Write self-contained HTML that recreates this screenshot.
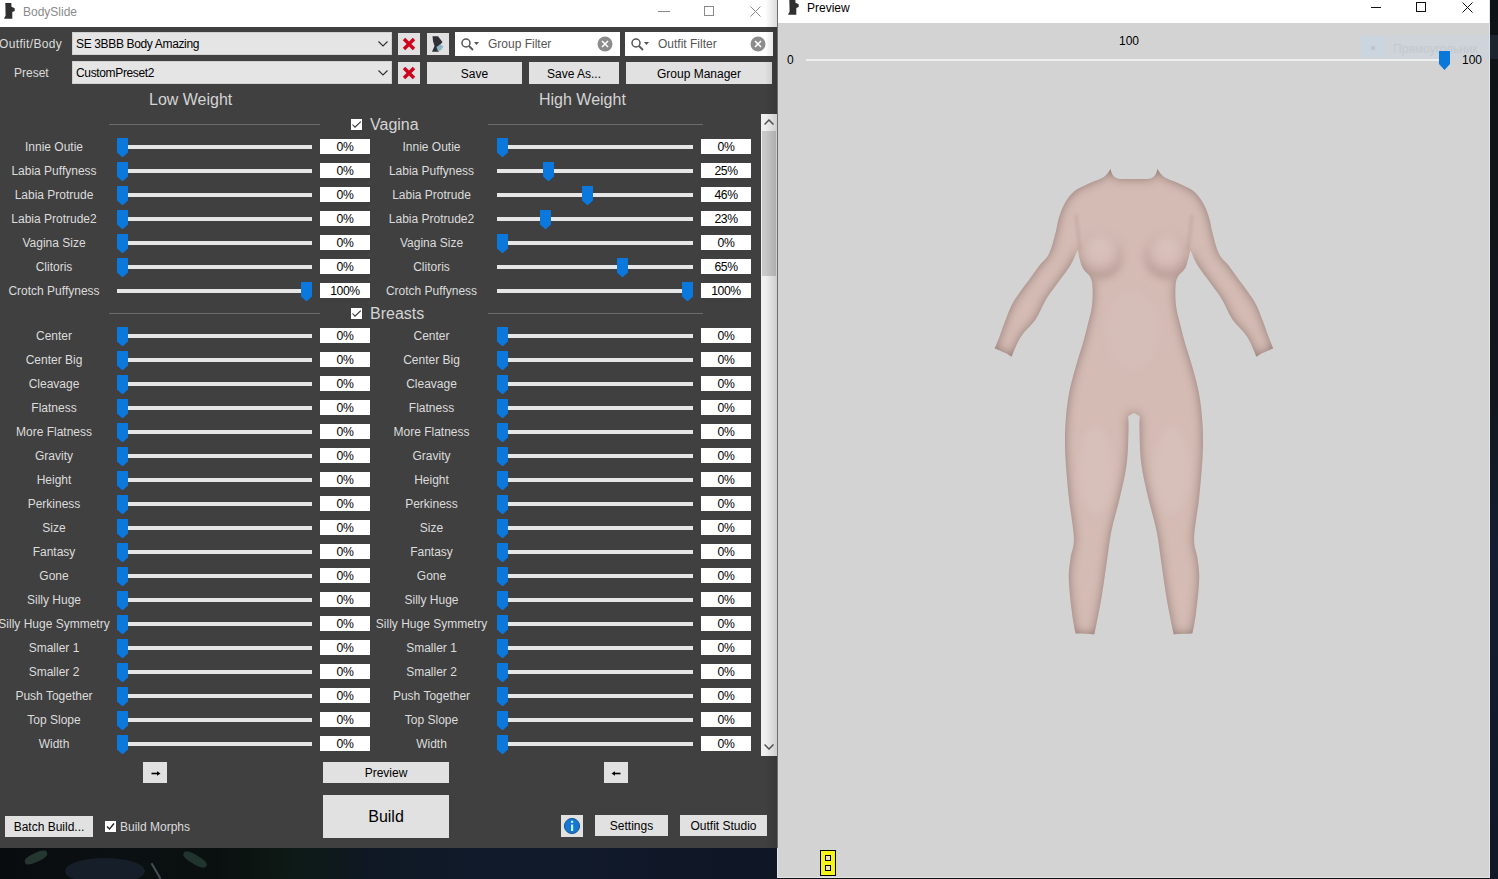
<!DOCTYPE html><html><head><meta charset="utf-8"><style>
*{box-sizing:border-box;margin:0;padding:0}
html,body{width:1498px;height:879px;overflow:hidden;background:#0b1016;font-family:"Liberation Sans",sans-serif;font-size:12px;position:relative}
.abs{position:absolute}
.t{position:absolute;white-space:nowrap;line-height:1}
.lbl{position:absolute;white-space:nowrap;color:#dcdcdc;font-size:12px;line-height:14px;text-align:center}
.trk{position:absolute;height:4px;background:#e6e6e6}
.thm{position:absolute;width:11px;height:20px}
.box{position:absolute;width:50px;height:15px;background:#fff;color:#000;font-size:12.2px;line-height:17px;text-align:center;letter-spacing:-0.4px}
.btn{position:absolute;background:#e1e1e1;color:#000;font-size:12px;text-align:center}
.sep{position:absolute;height:1px;background:#6b6b6b}
.hd{position:absolute;color:#d4d4d4;font-size:16px;line-height:18px;white-space:nowrap}
.cb{position:absolute;width:12px;height:12px;background:#fff}

</style></head><body>
<div class="abs" style="left:0;top:848px;width:777px;height:31px;background:linear-gradient(90deg,#090c0e 0%,#0b1012 15%,#0a100f 28%,#0e1a16 38%,#0f1824 48%,#111a2b 65%,#0f1726 100%)"></div>
<div class="abs" style="left:65px;top:858px;width:80px;height:26px;border-radius:50%;background:#17212c;opacity:.9"></div>
<div class="abs" style="left:24px;top:853px;width:24px;height:9px;border-radius:40%;background:#3a5a4a;opacity:.55;transform:rotate(-25deg)"></div>
<div class="abs" style="left:182px;top:855px;width:26px;height:9px;border-radius:40%;background:#38584a;opacity:.5;transform:rotate(30deg)"></div>
<div class="abs" style="left:155px;top:862px;width:2px;height:18px;background:#6a7a84;opacity:.6;transform:rotate(-30deg)"></div>
<div class="abs" style="left:1490px;top:0;width:8px;height:879px;background:linear-gradient(180deg,#0d1216 0%,#11171c 45%,#141e30 62%,#101826 100%)"></div>
<div class="abs" style="left:0;top:0;width:777px;height:27px;background:#fff"></div>
<div class="abs" style="left:0;top:27px;width:777px;height:821px;background:#404040"></div>
<svg class="abs" style="left:0;top:0" width="20" height="22" viewBox="0 0 20 22"><path d="M5.3 3 H11.3 L11.5 6.8 L14.7 8.2 V10.9 L12.3 12 V18.8 H4 L5.6 15.5 Z" fill="#303030"/></svg>
<div class="t" style="left:23px;top:5px;color:#8a8a8a;font-size:12px;line-height:14px">BodySlide</div>
<div class="abs" style="left:658px;top:11px;width:12px;height:1px;background:#8a8a8a"></div>
<div class="abs" style="left:704px;top:6px;width:10px;height:10px;border:1px solid #8a8a8a"></div>
<svg class="abs" style="left:750px;top:6px" width="11" height="11"><path d="M0.5 0.5 L10.5 10.5 M10.5 0.5 L0.5 10.5" stroke="#8a8a8a" stroke-width="1"/></svg>
<div class="t" style="left:-1px;top:37px;color:#dcdcdc;line-height:14px;letter-spacing:0.35px">Outfit/Body</div>
<div class="t" style="left:14px;top:66px;color:#dcdcdc;line-height:14px">Preset</div>
<div class="abs" style="left:72px;top:32px;width:320px;height:23px;background:#e5e5e5;border:1px solid #d0d0d0"></div>
<div class="t" style="left:76px;top:37px;color:#000;line-height:14px;letter-spacing:-0.35px">SE 3BBB Body Amazing</div>
<svg class="abs" style="left:378px;top:41px" width="10" height="6"><path d="M0.5 0.5 L5 5 L9.5 0.5" stroke="#333" stroke-width="1.2" fill="none"/></svg>
<div class="abs" style="left:72px;top:61px;width:320px;height:23px;background:#e5e5e5;border:1px solid #d0d0d0"></div>
<div class="t" style="left:76px;top:66px;color:#000;line-height:14px;letter-spacing:-0.35px">CustomPreset2</div>
<svg class="abs" style="left:378px;top:70px" width="10" height="6"><path d="M0.5 0.5 L5 5 L9.5 0.5" stroke="#333" stroke-width="1.2" fill="none"/></svg>
<div class="abs" style="left:398px;top:33px;width:22px;height:22px;background:#e1e1e1"></div>
<svg class="abs" style="left:402px;top:37px" width="14" height="14"><path d="M2 2 L12 12 M12 2 L2 12" stroke="#d0021b" stroke-width="3.4"/></svg>
<div class="abs" style="left:398px;top:62px;width:22px;height:22px;background:#e1e1e1"></div>
<svg class="abs" style="left:402px;top:66px" width="14" height="14"><path d="M2 2 L12 12 M12 2 L2 12" stroke="#d0021b" stroke-width="3.4"/></svg>
<div class="abs" style="left:427px;top:33px;width:22px;height:22px;background:#e1e1e1"></div>
<svg class="abs" style="left:427px;top:33px" width="22" height="22" viewBox="0 0 22 22"><path d="M5.5 3.2 H11 L15.5 9 L13 12 L10.5 13.5 L12 18.8 H5 L7.5 13 L6 8 Z" fill="#2f3136"/><path d="M9.5 14 L12 12.5 L13 11 L16.5 13.5 L14 17 L11 18.5 Z" fill="#8fb6c8"/></svg>
<div class="abs" style="left:455px;top:32px;width:165px;height:24px;background:#fff"></div>
<svg class="abs" style="left:461px;top:38px" width="20" height="14"><circle cx="5" cy="5" r="4" stroke="#555" stroke-width="1.5" fill="none"/><path d="M8 8 L12 12" stroke="#555" stroke-width="1.8"/><path d="M13 4 H18 L15.5 7 Z" fill="#555"/></svg>
<div class="t" style="left:488px;top:37px;color:#555;line-height:14px">Group Filter</div>
<svg class="abs" style="left:597px;top:36px" width="16" height="16"><circle cx="8" cy="8" r="7.5" fill="#8c8c8c"/><path d="M5 5 L11 11 M11 5 L5 11" stroke="#fff" stroke-width="1.6"/></svg>
<div class="abs" style="left:625px;top:32px;width:148px;height:24px;background:#fff"></div>
<svg class="abs" style="left:631px;top:38px" width="20" height="14"><circle cx="5" cy="5" r="4" stroke="#555" stroke-width="1.5" fill="none"/><path d="M8 8 L12 12" stroke="#555" stroke-width="1.8"/><path d="M13 4 H18 L15.5 7 Z" fill="#555"/></svg>
<div class="t" style="left:658px;top:37px;color:#555;line-height:14px">Outfit Filter</div>
<svg class="abs" style="left:750px;top:36px" width="16" height="16"><circle cx="8" cy="8" r="7.5" fill="#8c8c8c"/><path d="M5 5 L11 11 M11 5 L5 11" stroke="#fff" stroke-width="1.6"/></svg>
<div class="btn" style="left:427px;top:62px;width:95px;height:22px;line-height:24px;font-size:12px;">Save</div>
<div class="btn" style="left:529px;top:62px;width:90px;height:22px;line-height:24px;font-size:12px;">Save As...</div>
<div class="btn" style="left:626px;top:62px;width:146px;height:22px;line-height:24px;font-size:12px;">Group Manager</div>
<div class="hd" style="left:149px;top:91px">Low Weight</div>
<div class="hd" style="left:539px;top:91px">High Weight</div>
<div class="sep" style="left:109px;top:124px;width:211px"></div>
<div class="sep" style="left:488px;top:124px;width:215px"></div>
<div class="cb" style="left:351px;top:119px;width:11px;height:11px"></div>
<svg class="abs" style="left:351px;top:119px" width="11" height="11"><path d="M1.5 5.5 L4 8.2 L9.8 2.6" stroke="#333" stroke-width="1.1" fill="none"/></svg>
<div class="hd" style="left:370px;top:116px">Vagina</div>
<div class="lbl" style="left:-16px;width:140px;top:140px">Innie Outie</div>
<div class="trk" style="left:117px;top:145px;width:195px"></div>
<svg class="thm" style="left:117px;top:138px" width="11" height="20" viewBox="0 0 11 20"><path d="M0 0 H11 V14.5 L6.3 18.8 Q5.5 19.4 4.7 18.8 L0 14.5 Z" fill="#0a78dc"/></svg>
<div class="box" style="left:320px;top:139px">0%</div>
<div class="lbl" style="left:361.5px;width:140px;top:140px">Innie Outie</div>
<div class="trk" style="left:497px;top:145px;width:196px"></div>
<svg class="thm" style="left:497px;top:138px" width="11" height="20" viewBox="0 0 11 20"><path d="M0 0 H11 V14.5 L6.3 18.8 Q5.5 19.4 4.7 18.8 L0 14.5 Z" fill="#0a78dc"/></svg>
<div class="box" style="left:701px;top:139px">0%</div>
<div class="lbl" style="left:-16px;width:140px;top:164px">Labia Puffyness</div>
<div class="trk" style="left:117px;top:169px;width:195px"></div>
<svg class="thm" style="left:117px;top:162px" width="11" height="20" viewBox="0 0 11 20"><path d="M0 0 H11 V14.5 L6.3 18.8 Q5.5 19.4 4.7 18.8 L0 14.5 Z" fill="#0a78dc"/></svg>
<div class="box" style="left:320px;top:163px">0%</div>
<div class="lbl" style="left:361.5px;width:140px;top:164px">Labia Puffyness</div>
<div class="trk" style="left:497px;top:169px;width:196px"></div>
<svg class="thm" style="left:543px;top:162px" width="11" height="20" viewBox="0 0 11 20"><path d="M0 0 H11 V14.5 L6.3 18.8 Q5.5 19.4 4.7 18.8 L0 14.5 Z" fill="#0a78dc"/></svg>
<div class="box" style="left:701px;top:163px">25%</div>
<div class="lbl" style="left:-16px;width:140px;top:188px">Labia Protrude</div>
<div class="trk" style="left:117px;top:193px;width:195px"></div>
<svg class="thm" style="left:117px;top:186px" width="11" height="20" viewBox="0 0 11 20"><path d="M0 0 H11 V14.5 L6.3 18.8 Q5.5 19.4 4.7 18.8 L0 14.5 Z" fill="#0a78dc"/></svg>
<div class="box" style="left:320px;top:187px">0%</div>
<div class="lbl" style="left:361.5px;width:140px;top:188px">Labia Protrude</div>
<div class="trk" style="left:497px;top:193px;width:196px"></div>
<svg class="thm" style="left:582px;top:186px" width="11" height="20" viewBox="0 0 11 20"><path d="M0 0 H11 V14.5 L6.3 18.8 Q5.5 19.4 4.7 18.8 L0 14.5 Z" fill="#0a78dc"/></svg>
<div class="box" style="left:701px;top:187px">46%</div>
<div class="lbl" style="left:-16px;width:140px;top:212px">Labia Protrude2</div>
<div class="trk" style="left:117px;top:217px;width:195px"></div>
<svg class="thm" style="left:117px;top:210px" width="11" height="20" viewBox="0 0 11 20"><path d="M0 0 H11 V14.5 L6.3 18.8 Q5.5 19.4 4.7 18.8 L0 14.5 Z" fill="#0a78dc"/></svg>
<div class="box" style="left:320px;top:211px">0%</div>
<div class="lbl" style="left:361.5px;width:140px;top:212px">Labia Protrude2</div>
<div class="trk" style="left:497px;top:217px;width:196px"></div>
<svg class="thm" style="left:540px;top:210px" width="11" height="20" viewBox="0 0 11 20"><path d="M0 0 H11 V14.5 L6.3 18.8 Q5.5 19.4 4.7 18.8 L0 14.5 Z" fill="#0a78dc"/></svg>
<div class="box" style="left:701px;top:211px">23%</div>
<div class="lbl" style="left:-16px;width:140px;top:236px">Vagina Size</div>
<div class="trk" style="left:117px;top:241px;width:195px"></div>
<svg class="thm" style="left:117px;top:234px" width="11" height="20" viewBox="0 0 11 20"><path d="M0 0 H11 V14.5 L6.3 18.8 Q5.5 19.4 4.7 18.8 L0 14.5 Z" fill="#0a78dc"/></svg>
<div class="box" style="left:320px;top:235px">0%</div>
<div class="lbl" style="left:361.5px;width:140px;top:236px">Vagina Size</div>
<div class="trk" style="left:497px;top:241px;width:196px"></div>
<svg class="thm" style="left:497px;top:234px" width="11" height="20" viewBox="0 0 11 20"><path d="M0 0 H11 V14.5 L6.3 18.8 Q5.5 19.4 4.7 18.8 L0 14.5 Z" fill="#0a78dc"/></svg>
<div class="box" style="left:701px;top:235px">0%</div>
<div class="lbl" style="left:-16px;width:140px;top:260px">Clitoris</div>
<div class="trk" style="left:117px;top:265px;width:195px"></div>
<svg class="thm" style="left:117px;top:258px" width="11" height="20" viewBox="0 0 11 20"><path d="M0 0 H11 V14.5 L6.3 18.8 Q5.5 19.4 4.7 18.8 L0 14.5 Z" fill="#0a78dc"/></svg>
<div class="box" style="left:320px;top:259px">0%</div>
<div class="lbl" style="left:361.5px;width:140px;top:260px">Clitoris</div>
<div class="trk" style="left:497px;top:265px;width:196px"></div>
<svg class="thm" style="left:617px;top:258px" width="11" height="20" viewBox="0 0 11 20"><path d="M0 0 H11 V14.5 L6.3 18.8 Q5.5 19.4 4.7 18.8 L0 14.5 Z" fill="#0a78dc"/></svg>
<div class="box" style="left:701px;top:259px">65%</div>
<div class="lbl" style="left:-16px;width:140px;top:284px">Crotch Puffyness</div>
<div class="trk" style="left:117px;top:289px;width:195px"></div>
<svg class="thm" style="left:301px;top:282px" width="11" height="20" viewBox="0 0 11 20"><path d="M0 0 H11 V14.5 L6.3 18.8 Q5.5 19.4 4.7 18.8 L0 14.5 Z" fill="#0a78dc"/></svg>
<div class="box" style="left:320px;top:283px">100%</div>
<div class="lbl" style="left:361.5px;width:140px;top:284px">Crotch Puffyness</div>
<div class="trk" style="left:497px;top:289px;width:196px"></div>
<svg class="thm" style="left:682px;top:282px" width="11" height="20" viewBox="0 0 11 20"><path d="M0 0 H11 V14.5 L6.3 18.8 Q5.5 19.4 4.7 18.8 L0 14.5 Z" fill="#0a78dc"/></svg>
<div class="box" style="left:701px;top:283px">100%</div>
<div class="sep" style="left:109px;top:313px;width:211px"></div>
<div class="sep" style="left:488px;top:313px;width:215px"></div>
<div class="cb" style="left:351px;top:308px;width:11px;height:11px"></div>
<svg class="abs" style="left:351px;top:308px" width="11" height="11"><path d="M1.5 5.5 L4 8.2 L9.8 2.6" stroke="#333" stroke-width="1.1" fill="none"/></svg>
<div class="hd" style="left:370px;top:305px">Breasts</div>
<div class="lbl" style="left:-16px;width:140px;top:329px">Center</div>
<div class="trk" style="left:117px;top:334px;width:195px"></div>
<svg class="thm" style="left:117px;top:327px" width="11" height="20" viewBox="0 0 11 20"><path d="M0 0 H11 V14.5 L6.3 18.8 Q5.5 19.4 4.7 18.8 L0 14.5 Z" fill="#0a78dc"/></svg>
<div class="box" style="left:320px;top:328px">0%</div>
<div class="lbl" style="left:361.5px;width:140px;top:329px">Center</div>
<div class="trk" style="left:497px;top:334px;width:196px"></div>
<svg class="thm" style="left:497px;top:327px" width="11" height="20" viewBox="0 0 11 20"><path d="M0 0 H11 V14.5 L6.3 18.8 Q5.5 19.4 4.7 18.8 L0 14.5 Z" fill="#0a78dc"/></svg>
<div class="box" style="left:701px;top:328px">0%</div>
<div class="lbl" style="left:-16px;width:140px;top:353px">Center Big</div>
<div class="trk" style="left:117px;top:358px;width:195px"></div>
<svg class="thm" style="left:117px;top:351px" width="11" height="20" viewBox="0 0 11 20"><path d="M0 0 H11 V14.5 L6.3 18.8 Q5.5 19.4 4.7 18.8 L0 14.5 Z" fill="#0a78dc"/></svg>
<div class="box" style="left:320px;top:352px">0%</div>
<div class="lbl" style="left:361.5px;width:140px;top:353px">Center Big</div>
<div class="trk" style="left:497px;top:358px;width:196px"></div>
<svg class="thm" style="left:497px;top:351px" width="11" height="20" viewBox="0 0 11 20"><path d="M0 0 H11 V14.5 L6.3 18.8 Q5.5 19.4 4.7 18.8 L0 14.5 Z" fill="#0a78dc"/></svg>
<div class="box" style="left:701px;top:352px">0%</div>
<div class="lbl" style="left:-16px;width:140px;top:377px">Cleavage</div>
<div class="trk" style="left:117px;top:382px;width:195px"></div>
<svg class="thm" style="left:117px;top:375px" width="11" height="20" viewBox="0 0 11 20"><path d="M0 0 H11 V14.5 L6.3 18.8 Q5.5 19.4 4.7 18.8 L0 14.5 Z" fill="#0a78dc"/></svg>
<div class="box" style="left:320px;top:376px">0%</div>
<div class="lbl" style="left:361.5px;width:140px;top:377px">Cleavage</div>
<div class="trk" style="left:497px;top:382px;width:196px"></div>
<svg class="thm" style="left:497px;top:375px" width="11" height="20" viewBox="0 0 11 20"><path d="M0 0 H11 V14.5 L6.3 18.8 Q5.5 19.4 4.7 18.8 L0 14.5 Z" fill="#0a78dc"/></svg>
<div class="box" style="left:701px;top:376px">0%</div>
<div class="lbl" style="left:-16px;width:140px;top:401px">Flatness</div>
<div class="trk" style="left:117px;top:406px;width:195px"></div>
<svg class="thm" style="left:117px;top:399px" width="11" height="20" viewBox="0 0 11 20"><path d="M0 0 H11 V14.5 L6.3 18.8 Q5.5 19.4 4.7 18.8 L0 14.5 Z" fill="#0a78dc"/></svg>
<div class="box" style="left:320px;top:400px">0%</div>
<div class="lbl" style="left:361.5px;width:140px;top:401px">Flatness</div>
<div class="trk" style="left:497px;top:406px;width:196px"></div>
<svg class="thm" style="left:497px;top:399px" width="11" height="20" viewBox="0 0 11 20"><path d="M0 0 H11 V14.5 L6.3 18.8 Q5.5 19.4 4.7 18.8 L0 14.5 Z" fill="#0a78dc"/></svg>
<div class="box" style="left:701px;top:400px">0%</div>
<div class="lbl" style="left:-16px;width:140px;top:425px">More Flatness</div>
<div class="trk" style="left:117px;top:430px;width:195px"></div>
<svg class="thm" style="left:117px;top:423px" width="11" height="20" viewBox="0 0 11 20"><path d="M0 0 H11 V14.5 L6.3 18.8 Q5.5 19.4 4.7 18.8 L0 14.5 Z" fill="#0a78dc"/></svg>
<div class="box" style="left:320px;top:424px">0%</div>
<div class="lbl" style="left:361.5px;width:140px;top:425px">More Flatness</div>
<div class="trk" style="left:497px;top:430px;width:196px"></div>
<svg class="thm" style="left:497px;top:423px" width="11" height="20" viewBox="0 0 11 20"><path d="M0 0 H11 V14.5 L6.3 18.8 Q5.5 19.4 4.7 18.8 L0 14.5 Z" fill="#0a78dc"/></svg>
<div class="box" style="left:701px;top:424px">0%</div>
<div class="lbl" style="left:-16px;width:140px;top:449px">Gravity</div>
<div class="trk" style="left:117px;top:454px;width:195px"></div>
<svg class="thm" style="left:117px;top:447px" width="11" height="20" viewBox="0 0 11 20"><path d="M0 0 H11 V14.5 L6.3 18.8 Q5.5 19.4 4.7 18.8 L0 14.5 Z" fill="#0a78dc"/></svg>
<div class="box" style="left:320px;top:448px">0%</div>
<div class="lbl" style="left:361.5px;width:140px;top:449px">Gravity</div>
<div class="trk" style="left:497px;top:454px;width:196px"></div>
<svg class="thm" style="left:497px;top:447px" width="11" height="20" viewBox="0 0 11 20"><path d="M0 0 H11 V14.5 L6.3 18.8 Q5.5 19.4 4.7 18.8 L0 14.5 Z" fill="#0a78dc"/></svg>
<div class="box" style="left:701px;top:448px">0%</div>
<div class="lbl" style="left:-16px;width:140px;top:473px">Height</div>
<div class="trk" style="left:117px;top:478px;width:195px"></div>
<svg class="thm" style="left:117px;top:471px" width="11" height="20" viewBox="0 0 11 20"><path d="M0 0 H11 V14.5 L6.3 18.8 Q5.5 19.4 4.7 18.8 L0 14.5 Z" fill="#0a78dc"/></svg>
<div class="box" style="left:320px;top:472px">0%</div>
<div class="lbl" style="left:361.5px;width:140px;top:473px">Height</div>
<div class="trk" style="left:497px;top:478px;width:196px"></div>
<svg class="thm" style="left:497px;top:471px" width="11" height="20" viewBox="0 0 11 20"><path d="M0 0 H11 V14.5 L6.3 18.8 Q5.5 19.4 4.7 18.8 L0 14.5 Z" fill="#0a78dc"/></svg>
<div class="box" style="left:701px;top:472px">0%</div>
<div class="lbl" style="left:-16px;width:140px;top:497px">Perkiness</div>
<div class="trk" style="left:117px;top:502px;width:195px"></div>
<svg class="thm" style="left:117px;top:495px" width="11" height="20" viewBox="0 0 11 20"><path d="M0 0 H11 V14.5 L6.3 18.8 Q5.5 19.4 4.7 18.8 L0 14.5 Z" fill="#0a78dc"/></svg>
<div class="box" style="left:320px;top:496px">0%</div>
<div class="lbl" style="left:361.5px;width:140px;top:497px">Perkiness</div>
<div class="trk" style="left:497px;top:502px;width:196px"></div>
<svg class="thm" style="left:497px;top:495px" width="11" height="20" viewBox="0 0 11 20"><path d="M0 0 H11 V14.5 L6.3 18.8 Q5.5 19.4 4.7 18.8 L0 14.5 Z" fill="#0a78dc"/></svg>
<div class="box" style="left:701px;top:496px">0%</div>
<div class="lbl" style="left:-16px;width:140px;top:521px">Size</div>
<div class="trk" style="left:117px;top:526px;width:195px"></div>
<svg class="thm" style="left:117px;top:519px" width="11" height="20" viewBox="0 0 11 20"><path d="M0 0 H11 V14.5 L6.3 18.8 Q5.5 19.4 4.7 18.8 L0 14.5 Z" fill="#0a78dc"/></svg>
<div class="box" style="left:320px;top:520px">0%</div>
<div class="lbl" style="left:361.5px;width:140px;top:521px">Size</div>
<div class="trk" style="left:497px;top:526px;width:196px"></div>
<svg class="thm" style="left:497px;top:519px" width="11" height="20" viewBox="0 0 11 20"><path d="M0 0 H11 V14.5 L6.3 18.8 Q5.5 19.4 4.7 18.8 L0 14.5 Z" fill="#0a78dc"/></svg>
<div class="box" style="left:701px;top:520px">0%</div>
<div class="lbl" style="left:-16px;width:140px;top:545px">Fantasy</div>
<div class="trk" style="left:117px;top:550px;width:195px"></div>
<svg class="thm" style="left:117px;top:543px" width="11" height="20" viewBox="0 0 11 20"><path d="M0 0 H11 V14.5 L6.3 18.8 Q5.5 19.4 4.7 18.8 L0 14.5 Z" fill="#0a78dc"/></svg>
<div class="box" style="left:320px;top:544px">0%</div>
<div class="lbl" style="left:361.5px;width:140px;top:545px">Fantasy</div>
<div class="trk" style="left:497px;top:550px;width:196px"></div>
<svg class="thm" style="left:497px;top:543px" width="11" height="20" viewBox="0 0 11 20"><path d="M0 0 H11 V14.5 L6.3 18.8 Q5.5 19.4 4.7 18.8 L0 14.5 Z" fill="#0a78dc"/></svg>
<div class="box" style="left:701px;top:544px">0%</div>
<div class="lbl" style="left:-16px;width:140px;top:569px">Gone</div>
<div class="trk" style="left:117px;top:574px;width:195px"></div>
<svg class="thm" style="left:117px;top:567px" width="11" height="20" viewBox="0 0 11 20"><path d="M0 0 H11 V14.5 L6.3 18.8 Q5.5 19.4 4.7 18.8 L0 14.5 Z" fill="#0a78dc"/></svg>
<div class="box" style="left:320px;top:568px">0%</div>
<div class="lbl" style="left:361.5px;width:140px;top:569px">Gone</div>
<div class="trk" style="left:497px;top:574px;width:196px"></div>
<svg class="thm" style="left:497px;top:567px" width="11" height="20" viewBox="0 0 11 20"><path d="M0 0 H11 V14.5 L6.3 18.8 Q5.5 19.4 4.7 18.8 L0 14.5 Z" fill="#0a78dc"/></svg>
<div class="box" style="left:701px;top:568px">0%</div>
<div class="lbl" style="left:-16px;width:140px;top:593px">Silly Huge</div>
<div class="trk" style="left:117px;top:598px;width:195px"></div>
<svg class="thm" style="left:117px;top:591px" width="11" height="20" viewBox="0 0 11 20"><path d="M0 0 H11 V14.5 L6.3 18.8 Q5.5 19.4 4.7 18.8 L0 14.5 Z" fill="#0a78dc"/></svg>
<div class="box" style="left:320px;top:592px">0%</div>
<div class="lbl" style="left:361.5px;width:140px;top:593px">Silly Huge</div>
<div class="trk" style="left:497px;top:598px;width:196px"></div>
<svg class="thm" style="left:497px;top:591px" width="11" height="20" viewBox="0 0 11 20"><path d="M0 0 H11 V14.5 L6.3 18.8 Q5.5 19.4 4.7 18.8 L0 14.5 Z" fill="#0a78dc"/></svg>
<div class="box" style="left:701px;top:592px">0%</div>
<div class="lbl" style="left:-16px;width:140px;top:617px">Silly Huge Symmetry</div>
<div class="trk" style="left:117px;top:622px;width:195px"></div>
<svg class="thm" style="left:117px;top:615px" width="11" height="20" viewBox="0 0 11 20"><path d="M0 0 H11 V14.5 L6.3 18.8 Q5.5 19.4 4.7 18.8 L0 14.5 Z" fill="#0a78dc"/></svg>
<div class="box" style="left:320px;top:616px">0%</div>
<div class="lbl" style="left:361.5px;width:140px;top:617px">Silly Huge Symmetry</div>
<div class="trk" style="left:497px;top:622px;width:196px"></div>
<svg class="thm" style="left:497px;top:615px" width="11" height="20" viewBox="0 0 11 20"><path d="M0 0 H11 V14.5 L6.3 18.8 Q5.5 19.4 4.7 18.8 L0 14.5 Z" fill="#0a78dc"/></svg>
<div class="box" style="left:701px;top:616px">0%</div>
<div class="lbl" style="left:-16px;width:140px;top:641px">Smaller 1</div>
<div class="trk" style="left:117px;top:646px;width:195px"></div>
<svg class="thm" style="left:117px;top:639px" width="11" height="20" viewBox="0 0 11 20"><path d="M0 0 H11 V14.5 L6.3 18.8 Q5.5 19.4 4.7 18.8 L0 14.5 Z" fill="#0a78dc"/></svg>
<div class="box" style="left:320px;top:640px">0%</div>
<div class="lbl" style="left:361.5px;width:140px;top:641px">Smaller 1</div>
<div class="trk" style="left:497px;top:646px;width:196px"></div>
<svg class="thm" style="left:497px;top:639px" width="11" height="20" viewBox="0 0 11 20"><path d="M0 0 H11 V14.5 L6.3 18.8 Q5.5 19.4 4.7 18.8 L0 14.5 Z" fill="#0a78dc"/></svg>
<div class="box" style="left:701px;top:640px">0%</div>
<div class="lbl" style="left:-16px;width:140px;top:665px">Smaller 2</div>
<div class="trk" style="left:117px;top:670px;width:195px"></div>
<svg class="thm" style="left:117px;top:663px" width="11" height="20" viewBox="0 0 11 20"><path d="M0 0 H11 V14.5 L6.3 18.8 Q5.5 19.4 4.7 18.8 L0 14.5 Z" fill="#0a78dc"/></svg>
<div class="box" style="left:320px;top:664px">0%</div>
<div class="lbl" style="left:361.5px;width:140px;top:665px">Smaller 2</div>
<div class="trk" style="left:497px;top:670px;width:196px"></div>
<svg class="thm" style="left:497px;top:663px" width="11" height="20" viewBox="0 0 11 20"><path d="M0 0 H11 V14.5 L6.3 18.8 Q5.5 19.4 4.7 18.8 L0 14.5 Z" fill="#0a78dc"/></svg>
<div class="box" style="left:701px;top:664px">0%</div>
<div class="lbl" style="left:-16px;width:140px;top:689px">Push Together</div>
<div class="trk" style="left:117px;top:694px;width:195px"></div>
<svg class="thm" style="left:117px;top:687px" width="11" height="20" viewBox="0 0 11 20"><path d="M0 0 H11 V14.5 L6.3 18.8 Q5.5 19.4 4.7 18.8 L0 14.5 Z" fill="#0a78dc"/></svg>
<div class="box" style="left:320px;top:688px">0%</div>
<div class="lbl" style="left:361.5px;width:140px;top:689px">Push Together</div>
<div class="trk" style="left:497px;top:694px;width:196px"></div>
<svg class="thm" style="left:497px;top:687px" width="11" height="20" viewBox="0 0 11 20"><path d="M0 0 H11 V14.5 L6.3 18.8 Q5.5 19.4 4.7 18.8 L0 14.5 Z" fill="#0a78dc"/></svg>
<div class="box" style="left:701px;top:688px">0%</div>
<div class="lbl" style="left:-16px;width:140px;top:713px">Top Slope</div>
<div class="trk" style="left:117px;top:718px;width:195px"></div>
<svg class="thm" style="left:117px;top:711px" width="11" height="20" viewBox="0 0 11 20"><path d="M0 0 H11 V14.5 L6.3 18.8 Q5.5 19.4 4.7 18.8 L0 14.5 Z" fill="#0a78dc"/></svg>
<div class="box" style="left:320px;top:712px">0%</div>
<div class="lbl" style="left:361.5px;width:140px;top:713px">Top Slope</div>
<div class="trk" style="left:497px;top:718px;width:196px"></div>
<svg class="thm" style="left:497px;top:711px" width="11" height="20" viewBox="0 0 11 20"><path d="M0 0 H11 V14.5 L6.3 18.8 Q5.5 19.4 4.7 18.8 L0 14.5 Z" fill="#0a78dc"/></svg>
<div class="box" style="left:701px;top:712px">0%</div>
<div class="lbl" style="left:-16px;width:140px;top:737px">Width</div>
<div class="trk" style="left:117px;top:742px;width:195px"></div>
<svg class="thm" style="left:117px;top:735px" width="11" height="20" viewBox="0 0 11 20"><path d="M0 0 H11 V14.5 L6.3 18.8 Q5.5 19.4 4.7 18.8 L0 14.5 Z" fill="#0a78dc"/></svg>
<div class="box" style="left:320px;top:736px">0%</div>
<div class="lbl" style="left:361.5px;width:140px;top:737px">Width</div>
<div class="trk" style="left:497px;top:742px;width:196px"></div>
<svg class="thm" style="left:497px;top:735px" width="11" height="20" viewBox="0 0 11 20"><path d="M0 0 H11 V14.5 L6.3 18.8 Q5.5 19.4 4.7 18.8 L0 14.5 Z" fill="#0a78dc"/></svg>
<div class="box" style="left:701px;top:736px">0%</div>
<div class="abs" style="left:761px;top:114px;width:16px;height:642px;background:#f0f0f0"></div>
<div class="abs" style="left:762px;top:131px;width:14px;height:145px;background:#c9c9c9"></div>
<svg class="abs" style="left:764px;top:119px" width="10" height="6"><path d="M0.5 5.5 L5 1 L9.5 5.5" stroke="#555" stroke-width="1.5" fill="none"/></svg>
<svg class="abs" style="left:764px;top:744px" width="10" height="6"><path d="M0.5 0.5 L5 5 L9.5 0.5" stroke="#555" stroke-width="1.5" fill="none"/></svg>
<div class="btn" style="left:143px;top:762px;width:24px;height:21px;line-height:23px;font-size:12px;"></div>
<svg class="abs" style="left:151px;top:770px" width="10" height="7"><path d="M0.5 3.5 H7" stroke="#000" stroke-width="1.6"/><path d="M6 1.3 L9.5 3.5 L6 5.7 Z" fill="#000"/></svg>
<div class="btn" style="left:323px;top:762px;width:126px;height:21px;line-height:23px;font-size:12px;">Preview</div>
<div class="btn" style="left:604px;top:762px;width:24px;height:21px;line-height:23px;font-size:12px;"></div>
<svg class="abs" style="left:611px;top:770px" width="10" height="7"><path d="M3 3.5 H9.5" stroke="#000" stroke-width="1.6"/><path d="M4 1.3 L0.5 3.5 L4 5.7 Z" fill="#000"/></svg>
<div class="btn" style="left:323px;top:795px;width:126px;height:43px;line-height:43px;font-size:16px;">Build</div>
<div class="btn" style="left:5px;top:816px;width:88px;height:21px;line-height:23px;font-size:12px;">Batch Build...</div>
<div class="cb" style="left:105px;top:821px;width:11px;height:11px"></div>
<svg class="abs" style="left:105px;top:821px" width="11" height="11"><path d="M2 5.5 L4.5 8 L9 2.5" stroke="#222" stroke-width="1.3" fill="none"/></svg>
<div class="t" style="left:120px;top:820px;color:#dcdcdc;line-height:14px">Build Morphs</div>
<div class="btn" style="left:561px;top:815px;width:22px;height:22px"></div>
<svg class="abs" style="left:563px;top:817px" width="18" height="18"><circle cx="9" cy="9" r="7.6" fill="#1776d0" stroke="#0b4e8c" stroke-width="0.9"/><rect x="8" y="7.5" width="2.2" height="6.5" fill="#b8f4ff"/><rect x="8" y="3.8" width="2.2" height="2" fill="#b8f4ff"/></svg>
<div class="btn" style="left:595px;top:815px;width:73px;height:21px;line-height:23px;font-size:12px;">Settings</div>
<div class="btn" style="left:680px;top:815px;width:87px;height:21px;line-height:23px;font-size:12px;">Outfit Studio</div>
<div class="abs" style="left:765px;top:0;width:12px;height:848px;background:linear-gradient(90deg,rgba(0,0,0,0),rgba(0,0,0,0.14))"></div>
<div class="abs" style="left:777px;top:0;width:713px;height:878px;background:#e4e4e4"></div>
<div class="abs" style="left:777px;top:0;width:1px;height:848px;background:#6e6e6e"></div>
<div class="abs" style="left:778px;top:0;width:711px;height:23px;background:#fff"></div>
<div class="abs" style="left:778px;top:23px;width:711px;height:854px;background:#d3d3d3"></div>
<svg class="abs" style="left:784px;top:-4px" width="20" height="22" viewBox="0 0 20 22"><path d="M5.3 3 H11.3 L11.5 6.8 L14.7 8.2 V10.9 L12.3 12 V18.8 H4 L5.6 15.5 Z" fill="#303030"/></svg>
<div class="t" style="left:807px;top:1px;color:#000;font-size:12px;line-height:14px">Preview</div>
<div class="abs" style="left:1371px;top:7px;width:10px;height:1px;background:#111"></div>
<div class="abs" style="left:1416px;top:2px;width:10px;height:10px;border:1px solid #111"></div>
<svg class="abs" style="left:1462px;top:2px" width="11" height="11"><path d="M0.5 0.5 L10.5 10.5 M10.5 0.5 L0.5 10.5" stroke="#111" stroke-width="1"/></svg>
<div class="t" style="left:1119px;top:35px;color:#000;line-height:12px">100</div>
<div class="t" style="left:787px;top:54px;color:#000;line-height:12px">0</div>
<div class="abs" style="left:806px;top:59px;width:640px;height:2px;background:#eeeeee"></div>
<div class="abs" style="left:1360px;top:35px;width:130px;height:24px;background:rgba(190,215,240,0.25)"></div>
<div class="abs" style="left:1490px;top:35px;width:8px;height:24px;background:#1a2530"></div>
<div class="abs" style="left:1362px;top:37px;width:22px;height:20px;background:rgba(190,215,240,0.25)"></div>
<div class="abs" style="left:1371px;top:46px;width:4px;height:4px;background:#c2c6ca"></div>
<div class="t" style="left:1393px;top:42px;color:#c4c8cc;font-size:12px;line-height:14px">Прямоугольник</div>
<svg class="abs" style="left:1439px;top:51px" width="11" height="19" viewBox="0 0 11 19"><path d="M0 0 H11 V13 L5.5 19 L0 13 Z" fill="#0a78d8"/></svg>
<div class="t" style="left:1462px;top:54px;color:#000;line-height:12px">100</div>
<div class="abs" style="left:820px;top:850px;width:16px;height:26px;background:#f4f41a;border:1px solid #000"></div>
<div class="abs" style="left:825px;top:855px;width:6px;height:6px;background:#e8e0c0;border:1px solid #000"></div>
<div class="abs" style="left:825px;top:865px;width:6px;height:6px;background:#e8e0c0;border:1px solid #000"></div>
<svg class="abs" style="left:0;top:0" width="1498" height="879" viewBox="0 0 1498 879">
<defs>
<linearGradient id="skh" x1="1060" y1="0" x2="1208" y2="0" gradientUnits="userSpaceOnUse">
<stop offset="0" stop-color="#bfa69f"/><stop offset="0.15" stop-color="#d9c3bc"/><stop offset="0.5" stop-color="#dcc6bf"/><stop offset="0.85" stop-color="#d9c3bc"/><stop offset="1" stop-color="#bfa69f"/>
</linearGradient>
<filter id="bl" x="-50%" y="-50%" width="200%" height="200%"><feGaussianBlur stdDeviation="5"/></filter><filter id="bl3" x="-50%" y="-50%" width="200%" height="200%"><feGaussianBlur stdDeviation="3.5"/></filter><filter id="bl2" x="-100%" y="-50%" width="300%" height="200%"><feGaussianBlur stdDeviation="1.5"/></filter>
<filter id="inner" x="-10%" y="-10%" width="120%" height="120%">
<feGaussianBlur in="SourceAlpha" stdDeviation="5.5" result="b"/>
<feComposite in="SourceAlpha" in2="b" operator="out" result="edge"/>
<feFlood flood-color="#6e544e" flood-opacity="0.85"/>
<feComposite in2="edge" operator="in" result="shadow"/>
<feMerge><feMergeNode in="SourceGraphic"/><feMergeNode in="shadow"/></feMerge>
</filter>
<radialGradient id="br" cx="0.5" cy="0.42" r="0.58" fx="0.5" fy="0.3"><stop offset="0" stop-color="#dcc8c1"/><stop offset="0.55" stop-color="#d4bbb4"/><stop offset="0.85" stop-color="#b89d96"/><stop offset="1" stop-color="#a2867f" stop-opacity="0.9"/></radialGradient>
<clipPath id="bc"><path d="M1110.6 169.1 C1109.5 170.4 1107.6 174.5 1103.8 177.0 C1100.0 179.5 1092.9 181.5 1087.9 183.9 C1082.9 186.3 1077.9 188.2 1074.0 191.5 C1070.1 194.8 1067.0 199.5 1064.4 204.0 C1061.9 208.5 1060.2 213.6 1058.7 218.4 C1057.2 223.2 1057.1 227.1 1055.5 233.0 C1053.9 238.9 1051.7 248.5 1048.9 254.0 C1046.2 259.5 1042.3 261.7 1039.0 266.0 C1035.7 270.3 1032.2 275.7 1029.0 280.0 C1025.8 284.3 1022.9 287.8 1020.0 292.0 C1017.1 296.2 1014.1 300.2 1011.5 305.4 C1008.9 310.6 1006.3 318.1 1004.3 323.3 C1002.3 328.5 1001.2 332.2 999.6 336.4 C998.0 340.6 995.6 346.4 994.8 348.4 C996.6 349.2 1002.7 351.6 1005.5 353.0 C1008.3 354.4 1010.5 356.1 1011.5 356.7 C1013.1 353.3 1017.0 342.6 1021.0 336.4 C1025.0 330.2 1031.2 325.9 1035.4 319.7 C1039.6 313.5 1042.4 305.4 1046.0 299.4 C1049.6 293.4 1052.9 289.5 1056.9 283.9 C1060.9 278.3 1066.5 271.6 1070.0 266.0 C1073.5 260.4 1076.3 252.7 1077.6 250.0 C1078.4 252.9 1080.5 263.2 1082.6 267.6 C1084.7 272.0 1088.3 273.3 1090.0 276.4 C1091.7 279.5 1092.2 281.1 1092.5 286.0 C1092.8 290.9 1092.8 299.4 1092.0 305.7 C1091.2 312.0 1089.4 317.8 1087.9 323.9 C1086.5 329.9 1085.3 334.8 1083.3 342.0 C1081.2 349.2 1078.0 358.5 1075.6 367.3 C1073.2 376.1 1070.5 384.9 1068.8 394.6 C1067.1 404.3 1066.0 415.1 1065.4 425.3 C1064.8 435.5 1064.8 444.1 1065.4 456.0 C1066.0 467.9 1067.4 483.3 1068.8 497.0 C1070.2 510.7 1073.6 527.8 1073.9 538.0 C1074.2 548.2 1071.3 551.6 1070.5 558.4 C1069.7 565.2 1068.5 569.9 1068.8 579.0 C1069.0 588.1 1070.9 603.9 1072.0 613.0 C1073.1 622.1 1075.0 630.1 1075.6 633.5 C1078.7 633.6 1091.3 634.1 1094.4 634.2 C1095.5 628.4 1099.2 610.9 1101.2 599.4 C1103.2 587.9 1104.6 576.7 1106.3 565.3 C1108.0 553.9 1109.1 542.4 1111.4 531.0 C1113.7 519.6 1117.4 508.4 1120.0 497.0 C1122.6 485.6 1125.4 474.3 1126.8 462.9 C1128.2 451.5 1128.3 436.5 1128.5 428.7 C1128.7 420.9 1128.2 418.1 1128.2 416.0 C1129.2 415.5 1133.0 413.5 1134.0 413.0 C1135.0 413.5 1138.8 415.5 1139.8 416.0 C1139.8 418.1 1139.3 420.9 1139.5 428.7 C1139.7 436.5 1139.8 451.5 1141.2 462.9 C1142.6 474.3 1145.4 485.6 1148.0 497.0 C1150.6 508.4 1154.3 519.6 1156.6 531.0 C1158.9 542.4 1160.0 553.9 1161.7 565.3 C1163.4 576.7 1164.8 587.9 1166.8 599.4 C1168.8 610.9 1172.5 628.4 1173.6 634.2 C1176.7 634.1 1189.3 633.6 1192.4 633.5 C1193.0 630.1 1194.9 622.1 1196.0 613.0 C1197.1 603.9 1199.0 588.1 1199.2 579.0 C1199.5 569.9 1198.3 565.2 1197.5 558.4 C1196.7 551.6 1193.8 548.2 1194.1 538.0 C1194.4 527.8 1197.8 510.7 1199.2 497.0 C1200.6 483.3 1202.0 467.9 1202.6 456.0 C1203.2 444.1 1203.2 435.5 1202.6 425.3 C1202.0 415.1 1200.9 404.3 1199.2 394.6 C1197.5 384.9 1194.8 376.1 1192.4 367.3 C1190.0 358.5 1186.8 349.2 1184.7 342.0 C1182.7 334.8 1181.5 329.9 1180.1 323.9 C1178.6 317.8 1176.8 312.0 1176.0 305.7 C1175.2 299.4 1175.2 290.9 1175.5 286.0 C1175.8 281.1 1176.3 279.5 1178.0 276.4 C1179.7 273.3 1183.3 272.0 1185.4 267.6 C1187.5 263.2 1189.6 252.9 1190.4 250.0 C1191.7 252.7 1194.5 260.4 1198.0 266.0 C1201.5 271.6 1207.1 278.3 1211.1 283.9 C1215.1 289.5 1218.4 293.4 1222.0 299.4 C1225.6 305.4 1228.4 313.5 1232.6 319.7 C1236.8 325.9 1243.0 330.2 1247.0 336.4 C1251.0 342.6 1254.9 353.3 1256.5 356.7 C1257.5 356.1 1259.7 354.4 1262.5 353.0 C1265.3 351.6 1271.4 349.2 1273.2 348.4 C1272.4 346.4 1270.0 340.6 1268.4 336.4 C1266.8 332.2 1265.7 328.5 1263.7 323.3 C1261.7 318.1 1259.1 310.6 1256.5 305.4 C1253.9 300.2 1250.9 296.2 1248.0 292.0 C1245.1 287.8 1242.2 284.3 1239.0 280.0 C1235.8 275.7 1232.3 270.3 1229.0 266.0 C1225.7 261.7 1221.8 259.5 1219.1 254.0 C1216.3 248.5 1214.1 238.9 1212.5 233.0 C1210.9 227.1 1210.8 223.2 1209.3 218.4 C1207.8 213.6 1206.1 208.5 1203.6 204.0 C1201.0 199.5 1197.9 194.8 1194.0 191.5 C1190.1 188.2 1185.1 186.3 1180.1 183.9 C1175.1 181.5 1168.0 179.5 1164.2 177.0 C1160.4 174.5 1158.5 170.4 1157.4 169.1 C1156.4 175.1 1153.4 179 1147.4 179 L1120.6 179 C1114.6 179 1111.6 175.1 1110.6 169.1 Z"/></clipPath>
</defs>
<path d="M1110.6 169.1 C1109.5 170.4 1107.6 174.5 1103.8 177.0 C1100.0 179.5 1092.9 181.5 1087.9 183.9 C1082.9 186.3 1077.9 188.2 1074.0 191.5 C1070.1 194.8 1067.0 199.5 1064.4 204.0 C1061.9 208.5 1060.2 213.6 1058.7 218.4 C1057.2 223.2 1057.1 227.1 1055.5 233.0 C1053.9 238.9 1051.7 248.5 1048.9 254.0 C1046.2 259.5 1042.3 261.7 1039.0 266.0 C1035.7 270.3 1032.2 275.7 1029.0 280.0 C1025.8 284.3 1022.9 287.8 1020.0 292.0 C1017.1 296.2 1014.1 300.2 1011.5 305.4 C1008.9 310.6 1006.3 318.1 1004.3 323.3 C1002.3 328.5 1001.2 332.2 999.6 336.4 C998.0 340.6 995.6 346.4 994.8 348.4 C996.6 349.2 1002.7 351.6 1005.5 353.0 C1008.3 354.4 1010.5 356.1 1011.5 356.7 C1013.1 353.3 1017.0 342.6 1021.0 336.4 C1025.0 330.2 1031.2 325.9 1035.4 319.7 C1039.6 313.5 1042.4 305.4 1046.0 299.4 C1049.6 293.4 1052.9 289.5 1056.9 283.9 C1060.9 278.3 1066.5 271.6 1070.0 266.0 C1073.5 260.4 1076.3 252.7 1077.6 250.0 C1078.4 252.9 1080.5 263.2 1082.6 267.6 C1084.7 272.0 1088.3 273.3 1090.0 276.4 C1091.7 279.5 1092.2 281.1 1092.5 286.0 C1092.8 290.9 1092.8 299.4 1092.0 305.7 C1091.2 312.0 1089.4 317.8 1087.9 323.9 C1086.5 329.9 1085.3 334.8 1083.3 342.0 C1081.2 349.2 1078.0 358.5 1075.6 367.3 C1073.2 376.1 1070.5 384.9 1068.8 394.6 C1067.1 404.3 1066.0 415.1 1065.4 425.3 C1064.8 435.5 1064.8 444.1 1065.4 456.0 C1066.0 467.9 1067.4 483.3 1068.8 497.0 C1070.2 510.7 1073.6 527.8 1073.9 538.0 C1074.2 548.2 1071.3 551.6 1070.5 558.4 C1069.7 565.2 1068.5 569.9 1068.8 579.0 C1069.0 588.1 1070.9 603.9 1072.0 613.0 C1073.1 622.1 1075.0 630.1 1075.6 633.5 C1078.7 633.6 1091.3 634.1 1094.4 634.2 C1095.5 628.4 1099.2 610.9 1101.2 599.4 C1103.2 587.9 1104.6 576.7 1106.3 565.3 C1108.0 553.9 1109.1 542.4 1111.4 531.0 C1113.7 519.6 1117.4 508.4 1120.0 497.0 C1122.6 485.6 1125.4 474.3 1126.8 462.9 C1128.2 451.5 1128.3 436.5 1128.5 428.7 C1128.7 420.9 1128.2 418.1 1128.2 416.0 C1129.2 415.5 1133.0 413.5 1134.0 413.0 C1135.0 413.5 1138.8 415.5 1139.8 416.0 C1139.8 418.1 1139.3 420.9 1139.5 428.7 C1139.7 436.5 1139.8 451.5 1141.2 462.9 C1142.6 474.3 1145.4 485.6 1148.0 497.0 C1150.6 508.4 1154.3 519.6 1156.6 531.0 C1158.9 542.4 1160.0 553.9 1161.7 565.3 C1163.4 576.7 1164.8 587.9 1166.8 599.4 C1168.8 610.9 1172.5 628.4 1173.6 634.2 C1176.7 634.1 1189.3 633.6 1192.4 633.5 C1193.0 630.1 1194.9 622.1 1196.0 613.0 C1197.1 603.9 1199.0 588.1 1199.2 579.0 C1199.5 569.9 1198.3 565.2 1197.5 558.4 C1196.7 551.6 1193.8 548.2 1194.1 538.0 C1194.4 527.8 1197.8 510.7 1199.2 497.0 C1200.6 483.3 1202.0 467.9 1202.6 456.0 C1203.2 444.1 1203.2 435.5 1202.6 425.3 C1202.0 415.1 1200.9 404.3 1199.2 394.6 C1197.5 384.9 1194.8 376.1 1192.4 367.3 C1190.0 358.5 1186.8 349.2 1184.7 342.0 C1182.7 334.8 1181.5 329.9 1180.1 323.9 C1178.6 317.8 1176.8 312.0 1176.0 305.7 C1175.2 299.4 1175.2 290.9 1175.5 286.0 C1175.8 281.1 1176.3 279.5 1178.0 276.4 C1179.7 273.3 1183.3 272.0 1185.4 267.6 C1187.5 263.2 1189.6 252.9 1190.4 250.0 C1191.7 252.7 1194.5 260.4 1198.0 266.0 C1201.5 271.6 1207.1 278.3 1211.1 283.9 C1215.1 289.5 1218.4 293.4 1222.0 299.4 C1225.6 305.4 1228.4 313.5 1232.6 319.7 C1236.8 325.9 1243.0 330.2 1247.0 336.4 C1251.0 342.6 1254.9 353.3 1256.5 356.7 C1257.5 356.1 1259.7 354.4 1262.5 353.0 C1265.3 351.6 1271.4 349.2 1273.2 348.4 C1272.4 346.4 1270.0 340.6 1268.4 336.4 C1266.8 332.2 1265.7 328.5 1263.7 323.3 C1261.7 318.1 1259.1 310.6 1256.5 305.4 C1253.9 300.2 1250.9 296.2 1248.0 292.0 C1245.1 287.8 1242.2 284.3 1239.0 280.0 C1235.8 275.7 1232.3 270.3 1229.0 266.0 C1225.7 261.7 1221.8 259.5 1219.1 254.0 C1216.3 248.5 1214.1 238.9 1212.5 233.0 C1210.9 227.1 1210.8 223.2 1209.3 218.4 C1207.8 213.6 1206.1 208.5 1203.6 204.0 C1201.0 199.5 1197.9 194.8 1194.0 191.5 C1190.1 188.2 1185.1 186.3 1180.1 183.9 C1175.1 181.5 1168.0 179.5 1164.2 177.0 C1160.4 174.5 1158.5 170.4 1157.4 169.1 C1156.4 175.1 1153.4 179 1147.4 179 L1120.6 179 C1114.6 179 1111.6 175.1 1110.6 169.1 Z" fill="#d4bbb4" filter="url(#inner)"/>
<g clip-path="url(#bc)">
<circle cx="1100" cy="256" r="23" fill="url(#br)" filter="url(#bl3)" opacity="0.8"/>
<circle cx="1167" cy="256" r="23" fill="url(#br)" filter="url(#bl3)" opacity="0.8"/>
<path d="M1076 215 L1080 250" stroke="#9e857f" stroke-width="2.5" opacity="0.3" filter="url(#bl2)"/>
<path d="M1192 215 L1188 250" stroke="#9e857f" stroke-width="2.5" opacity="0.3" filter="url(#bl2)"/>
<ellipse cx="1096" cy="470" rx="18" ry="45" fill="#dcc8c2" opacity="0.4" filter="url(#bl3)"/>
<ellipse cx="1172" cy="470" rx="18" ry="45" fill="#dcc8c2" opacity="0.4" filter="url(#bl3)"/>
<ellipse cx="1133" cy="330" rx="28" ry="40" fill="#dcc8c2" opacity="0.25" filter="url(#bl3)"/>
</g>
</svg>
</body></html>
